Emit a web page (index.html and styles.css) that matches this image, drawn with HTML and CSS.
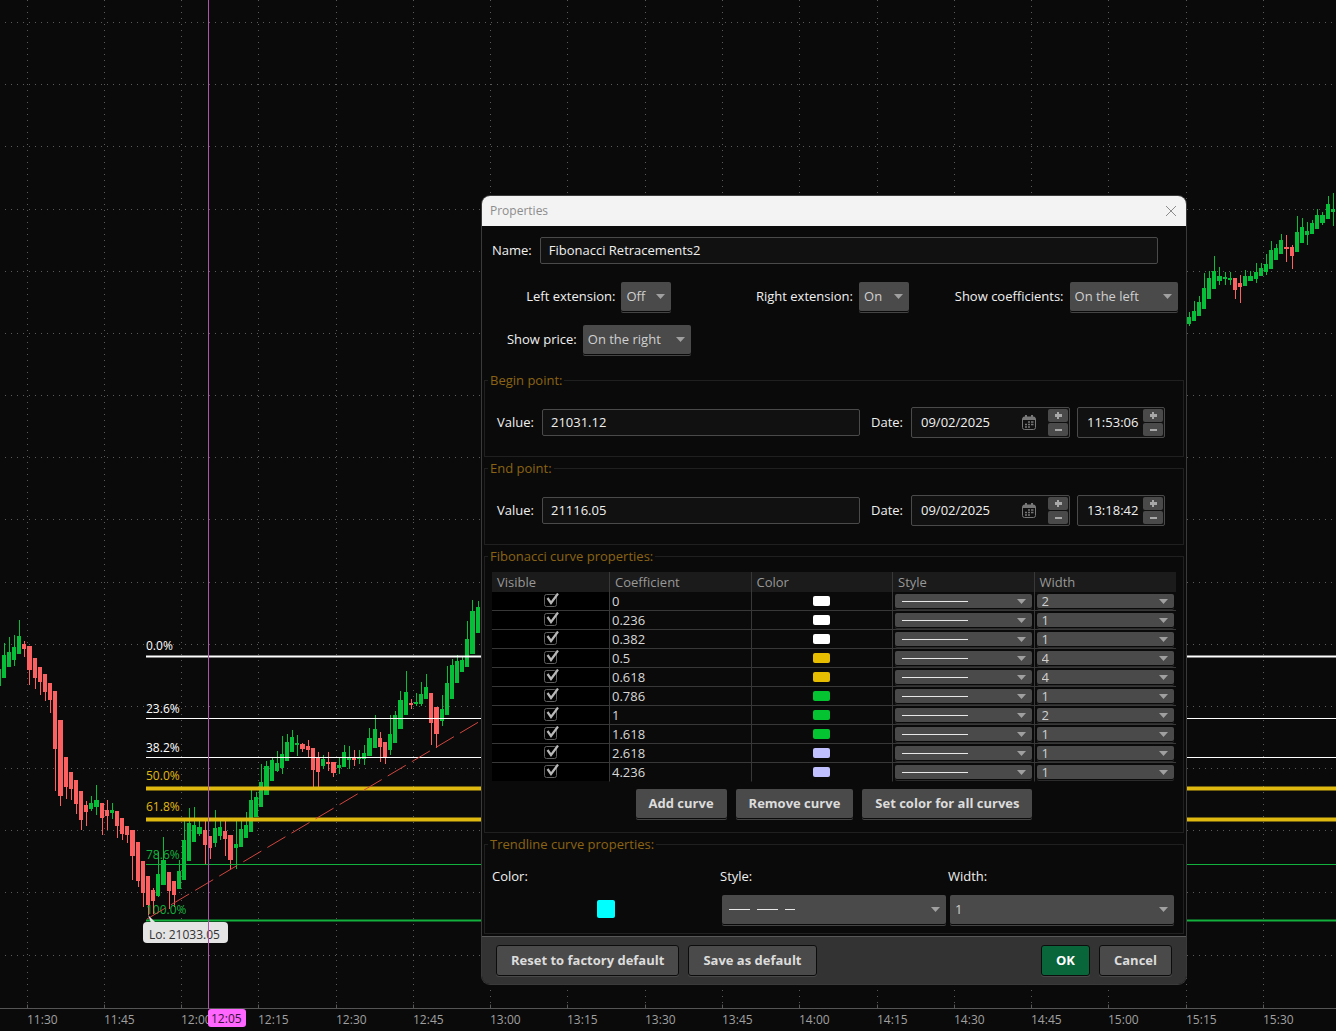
FILE: index.html
```
<!DOCTYPE html>
<html lang="en">
<head>
    <meta charset="UTF-8">
    <meta name="viewport" content="width=device-width, initial-scale=1.0">
    <title>Properties</title>
    <link rel="stylesheet" href="styles.css">
</head>
<body>
    <svg class="chart" id="chart" role="img" aria-label="Price chart">
        <g id="grid"></g>
        <g id="candles"></g>
        <g id="levels"></g>
        <line class="trend" x1="147" y1="919" x2="482" y2="720" />
        <g id="axis"></g>
        <path class="lo-tip" d="M148 915l8 8h-5z" />
        <rect class="lo-tip" x="143" y="922" width="85" height="21" rx="4" />
        <text class="lo-text" x="149" y="939">Lo: 21033.05</text>
        <line class="cursor" x1="208.5" y1="0" x2="208.5" y2="1009" />
        <rect class="cursor-tag" x="208" y="1009" width="38" height="18" rx="3" />
        <text class="cursor-text" x="211" y="1023">12:05</text>
    </svg>

    <form class="dialog" role="dialog" aria-labelledby="dialogTitle">
        <div class="titlebar">
            <span id="dialogTitle">Properties</span>
            <button type="button" class="close" aria-label="Close">
                <svg width="12" height="12" viewBox="0 0 12 12"><path d="M1 1l10 10M11 1L1 11" /></svg>
            </button>
        </div>

        <div class="name-row">
            <label for="name">Name:</label>
            <input type="text" id="name" value="Fibonacci Retracements2">
        </div>

        <div class="options">
            <div class="option">
                <label for="leftExt">Left extension:</label>
                <select id="leftExt" class="short"><option>Off</option><option>On</option></select>
            </div>
            <div class="option">
                <label for="rightExt">Right extension:</label>
                <select id="rightExt" class="short"><option>On</option><option>Off</option></select>
            </div>
            <div class="option">
                <label for="showCoef">Show coefficients:</label>
                <select id="showCoef" class="long"><option>On the left</option><option>On the right</option></select>
            </div>
            <div class="option">
                <label for="showPrice">Show price:</label>
                <select id="showPrice" class="long"><option>On the right</option><option>On the left</option></select>
            </div>
        </div>

        <fieldset>
            <legend>Begin point:</legend>
            <div class="point">
                <label for="beginValue">Value:</label>
                <input type="text" id="beginValue" class="value" value="21031.12">
                <label for="beginDate" class="date-label">Date:</label>
                <div class="spin date">
                    <input type="text" id="beginDate" value="09/02/2025">
                    <svg class="calendar" width="14" height="15" viewBox="0 0 14 15"><rect x="0.5" y="2" width="13" height="12.5" rx="2" fill="none" stroke="#777" /><path d="M1 2h12v3H1zM3 0h2v3H3zM9 0h2v3H9z" fill="#777" /><path d="M6 7h2M9 7h2.500M3 9.500h2M6 9.500h2M9 9.500h2.500M3 12h2M6 12h2" stroke="#777" stroke-width="1.400" /></svg>
                    <div class="steps"><button type="button" class="plus" aria-label="Date up"></button><button type="button" class="minus" aria-label="Date down"></button></div>
                </div>
                <div class="spin time">
                    <input type="text" aria-label="Begin time" value="11:53:06">
                    <div class="steps"><button type="button" class="plus" aria-label="Time up"></button><button type="button" class="minus" aria-label="Time down"></button></div>
                </div>
            </div>
        </fieldset>

        <fieldset>
            <legend>End point:</legend>
            <div class="point">
                <label for="endValue">Value:</label>
                <input type="text" id="endValue" class="value" value="21116.05">
                <label for="endDate" class="date-label">Date:</label>
                <div class="spin date">
                    <input type="text" id="endDate" value="09/02/2025">
                    <svg class="calendar" width="14" height="15" viewBox="0 0 14 15"><rect x="0.5" y="2" width="13" height="12.5" rx="2" fill="none" stroke="#777" /><path d="M1 2h12v3H1zM3 0h2v3H3zM9 0h2v3H9z" fill="#777" /><path d="M6 7h2M9 7h2.500M3 9.500h2M6 9.500h2M9 9.500h2.500M3 12h2M6 12h2" stroke="#777" stroke-width="1.400" /></svg>
                    <div class="steps"><button type="button" class="plus" aria-label="Date up"></button><button type="button" class="minus" aria-label="Date down"></button></div>
                </div>
                <div class="spin time">
                    <input type="text" aria-label="End time" value="13:18:42">
                    <div class="steps"><button type="button" class="plus" aria-label="Time up"></button><button type="button" class="minus" aria-label="Time down"></button></div>
                </div>
            </div>
        </fieldset>

        <fieldset>
            <legend>Fibonacci curve properties:</legend>
            <div class="curves">
                <table>
                    <thead>
                        <tr>
                            <th class="col-visible">Visible</th>
                            <th>Coefficient</th>
                            <th>Color</th>
                            <th>Style</th>
                            <th>Width</th>
                        </tr>
                    </thead>
                    <tbody id="curveRows"></tbody>
                </table>
                <div class="curve-buttons">
                    <button type="button" class="btn">Add curve</button>
                    <button type="button" class="btn">Remove curve</button>
                    <button type="button" class="btn">Set color for all curves</button>
                </div>
            </div>
        </fieldset>

        <fieldset>
            <legend>Trendline curve properties:</legend>
            <div class="trendline">
                <label for="trendColor">Color:</label>
                <label for="trendStyle">Style:</label>
                <label for="trendWidth">Width:</label>
                <input type="color" id="trendColor" class="big-swatch" value="#00ffff">
                <select id="trendStyle" class="line-dashed"><option value="dashed"></option></select>
                <select id="trendWidth"><option>1</option><option>2</option><option>4</option></select>
            </div>
        </fieldset>

        <div class="footer">
            <button type="button" class="btn">Reset to factory default</button>
            <button type="button" class="btn">Save as default</button>
            <button type="submit" class="btn ok">OK</button>
            <button type="button" class="btn">Cancel</button>
        </div>
    </form>

    <script src="script.js"></script>
</body>
</html>
```

FILE: styles.css
```
* {
    box-sizing: border-box;
}
body {
    margin: 0;
    height: 100vh;
    position: relative;
    overflow: hidden;
    background: #0a0a0a;
    color: #f0f0f0;
    font-family: 'Open Sans', 'Noto Sans', sans-serif;
    font-size: 13px;
    line-height: 18px;
}
input, select, button {
    font-family: inherit;
    font-size: 13px;
    color: inherit;
    margin: 0;
    padding: 0;
    border: none;
    outline: none;
}

/* Chart */
.chart {
    display: block;
    width: 100%;
    height: 100%;
    font-size: 12px;
}
.grid-h, .grid-v {
    stroke: #5a5a5a;
    stroke-dasharray: 1 5;
}
.up {
    fill: #07be38;
}
.down {
    fill: #fc6060;
}
.trend {
    stroke: #d04640;
    stroke-dasharray: 21 7;
}
.axis-line {
    stroke: #555;
}
.axis-text {
    fill: #a0a0a0;
}
.lo-tip {
    fill: #e4e4e4;
}
.lo-text {
    fill: #333;
}
.cursor {
    stroke: #b052ae;
}
.cursor-tag {
    fill: #ff66ff;
}
.cursor-text {
    fill: #3a123a;
}

/* Dialog window over the chart */
.dialog {
    position: absolute;
    top: 196px;
    left: 482px;
    width: 704px;
    background: #0a0a0a;
    border-radius: 8px;
    box-shadow: 0 0 0 1px #3a3a3a;
    overflow: hidden;
}
.titlebar {
    display: flex;
    align-items: center;
    justify-content: space-between;
    height: 30px;
    padding: 0 9px 0 8px;
    background: #f3f3f3;
    color: #8c8c8c;
    font-size: 12px;
}
.close {
    display: flex;
    background: none;
}
.close path {
    stroke: #8c8c8c;
    fill: none;
}
.name-row {
    display: flex;
    align-items: center;
    gap: 8px;
    padding: 11px 28px 0 10px;
}
.name-row input, .value {
    flex: 1;
    min-width: 0;
    height: 27px;
    padding: 0 8px 2px;
    background: #111;
    border: 1px solid #4a4a4a;
    border-radius: 2px;
}
.name-row label, .option label, .point label {
    padding-bottom: 2px;
}
.options {
    display: grid;
    grid-template-columns: repeat(3, 1fr);
    row-gap: 14px;
    padding: 18px 3px 17px 0;
}
.option {
    display: flex;
    align-items: center;
    justify-content: center;
    gap: 6px;
}
select {
    appearance: none;
    height: 29px;
    padding: 0 5px 2px;
    border-radius: 2px;
    color: #d0d0d0;
    background-color: #4a4a4a;
    background-image: url("data:image/svg+xml,%3Csvg xmlns='http://www.w3.org/2000/svg' width='9' height='5'%3E%3Cpath d='M0 0h9L4.500 5z' fill='%23a0a0a0'/%3E%3C/svg%3E");
    background-repeat: no-repeat;
    background-position: right 6px center;
    box-shadow: 0 1px #0a0a0a, 0 2px #444;
}
.short {
    width: 50px;
}
.long {
    width: 108px;
}

fieldset {
    margin: 0 2px 2px;
    padding: 0;
    min-width: 0;
    border: 1px solid #202020;
}
legend {
    margin-left: 3px;
    padding: 0 2px;
    color: #8a6414;
}
.point {
    display: flex;
    align-items: center;
    gap: 8px;
    padding: 18px 18px 18px 12px;
}
.date-label {
    margin-left: 3px;
}
.spin {
    display: flex;
    align-items: center;
    height: 31px;
    padding: 1px;
    background: #111;
    border: 1px solid #4a4a4a;
    border-radius: 2px;
}
.spin input {
    flex: 1;
    min-width: 0;
    padding: 0 0 2px 8px;
    background: none;
}
.date {
    width: 159px;
}
.time {
    width: 88px;
    margin-left: -1px;
}
.calendar {
    margin-right: 12px;
}
.steps {
    display: flex;
    flex-direction: column;
    gap: 1px;
}
.plus, .minus {
    width: 20px;
    height: 13px;
    border-radius: 2px;
    background: linear-gradient(#a8a8a8, #a8a8a8) center / 7px 2px no-repeat #4a4a4a;
}
.plus {
    background: linear-gradient(#a8a8a8, #a8a8a8) center / 7px 3px no-repeat, linear-gradient(#a8a8a8, #a8a8a8) center / 2px 7px no-repeat #4a4a4a;
}

/* Curves table */
.curves {
    padding: 7px 7px 14px;
}
table {
    width: 100%;
    table-layout: fixed;
    border-collapse: separate;
    border-spacing: 0;
}
th {
    height: 20px;
    padding: 0 5px;
    text-align: left;
    font-weight: 400;
    color: #989898;
    background: #1b1b1b;
    border-right: 1px solid #383838;
}
.col-visible {
    width: 118px;
}
td {
    height: 19px;
    padding: 0 2px;
    line-height: 16px;
    color: #d8d8d8;
    border-right: 1px solid #383838;
    border-bottom: 1px solid #383838;
}
th:last-child, td:last-child {
    border-right: none;
}
tr:last-child td {
    border-bottom-color: #0a0a0a;
}
td.visible {
    padding: 0 0 2px 1px;
    background: #000;
}
td input, td select {
    display: block;
    margin: 0 auto;
}
td select {
    width: 100%;
    height: 14px;
    padding: 0 5px;
    line-height: 14px;
    box-shadow: 0 1px #0a0a0a, 0 2px #2c2c2c;
}
input[type="checkbox"] {
    appearance: none;
    width: 15px;
    height: 15px;
    background: url("data:image/svg+xml,%3Csvg xmlns='http://www.w3.org/2000/svg' width='15' height='15'%3E%3Crect x='.5' y='1.500' width='12' height='12' rx='2' fill='none' stroke='%23606060'/%3E%3Cpath d='M3.500 5l3.500 5L14 .5' fill='none' stroke='%23b8b8b8' stroke-width='2.200'/%3E%3C/svg%3E") no-repeat;
}
input[type="color"] {
    appearance: none;
    width: 17px;
    height: 10px;
    background: none;
}
input[type="color"]::-webkit-color-swatch-wrapper {
    padding: 0;
}
input[type="color"]::-webkit-color-swatch {
    border: none;
    border-radius: 2px;
}
.line-solid, .line-dashed {
    background-image: url("data:image/svg+xml,%3Csvg xmlns='http://www.w3.org/2000/svg' width='9' height='5'%3E%3Cpath d='M0 0h9L4.500 5z' fill='%23a0a0a0'/%3E%3C/svg%3E"), linear-gradient(#e8e8e8, #e8e8e8);
    background-size: auto, 66px 1px;
    background-position: right 6px center, 7px center;
}
.line-dashed {
    background-image: url("data:image/svg+xml,%3Csvg xmlns='http://www.w3.org/2000/svg' width='9' height='5'%3E%3Cpath d='M0 0h9L4.500 5z' fill='%23a0a0a0'/%3E%3C/svg%3E"), url("data:image/svg+xml,%3Csvg xmlns='http://www.w3.org/2000/svg' width='66' height='1'%3E%3Cpath d='M0 .5h21m7 0h21m7 0h10' stroke='%23e8e8e8'/%3E%3C/svg%3E");
}

.btn {
    height: 29px;
    padding: 0 13px 2px;
    border-radius: 2px;
    font-weight: 700;
    color: #dcdcdc;
    background: #4a4a4a;
    box-shadow: 0 1px #0a0a0a, 0 2px #444;
}
.curve-buttons {
    display: flex;
    justify-content: center;
    gap: 9px;
    margin-top: 7px;
}
.trendline {
    display: grid;
    grid-template-columns: repeat(3, 1fr);
    row-gap: 10px;
    padding: 14px 7px 9px;
}
.trendline select {
    margin: 0 2px;
}
input.big-swatch {
    width: 18px;
    height: 18px;
    margin: 5px auto 0;
}
.footer {
    display: flex;
    gap: 9px;
    padding: 8px 14px;
    background: #333;
    border-top: 1px solid #585858;
}
.footer .btn {
    height: 31px;
    padding: 0 14px 2px;
    border: 1px solid #0c0c0c;
    border-radius: 3px;
    box-shadow: 0 1px #484848;
}
.footer .ok {
    margin-left: auto;
    color: #fff;
    background: #09653a;
}
```

FILE: script.js
```
const SVG_NS = 'http://www.w3.org/2000/svg';

function add(parent, tag, attrs, text) {
    const el = document.createElementNS(SVG_NS, tag);
    for (const key in attrs) {
        el.setAttribute(key, attrs[key]);
    }
    if (text) {
        el.textContent = text;
    }
    document.getElementById(parent).appendChild(el);
}

// Grid and time axis, one vertical line per 15 minutes
const AXIS_Y = 1008.5;
for (let i = 0; i < 16; i++) {
    const y = Math.floor(22.6 + 62.17 * i) + 0.5;
    add('grid', 'line', { class: 'grid-h', x1: 5, y1: y, x2: '100%', y2: y });
}
for (let i = 0; i < 17; i++) {
    const x = Math.floor(27 + 77.28 * i) + 0.5;
    const minutes = 690 + i * 15;
    const label = Math.floor(minutes / 60) + ':' + String(minutes % 60).padStart(2, '0');
    add('grid', 'line', { class: 'grid-v', x1: x, y1: 0, x2: x, y2: AXIS_Y });
    add('axis', 'line', { class: 'axis-line', x1: x, y1: AXIS_Y - 4, x2: x, y2: AXIS_Y });
    add('axis', 'text', { class: 'axis-text', x: x - 0.5, y: 1024 }, label);
}
add('axis', 'line', { class: 'axis-line', x1: 0, y1: AXIS_Y, x2: '100%', y2: AXIS_Y });

// Candles: direction, high, body top, body bottom, low
const STEP = 5.1515;
const morning = `g 669 669 686 686,g 643 655 678 678,g 637 652 667 667,g 635 647 660 666,g 620 636 654 654,
r 641 644 649 657,r 646 646 670 685,r 658 658 678 689,r 667 667 682 695,r 674 674 692 701,
r 683 683 700 713,r 691 691 749 791,r 720 720 796 806,r 757 757 787 799,r 772 772 789 800,
r 780 780 804 814,r 791 791 820 830,r 801 805 812 826,g 796 803 809 811,g 785 800 807 815,
r 803 803 818 835,r 800 810 816 830,g 803 810 813 819,r 811 811 826 838,r 818 818 834 840,
r 826 826 835 843,r 830 830 856 880,r 842 842 881 887,r 861 861 893 907,r 876 876 905 915,
r 888 890 901 914,g 852 874 896 897,g 837 860 885 885,r 872 872 891 909,r 881 881 895 907,
g 860 871 889 889,g 820 840 880 880,g 808 823 861 861,g 807 825 842 842,g 821 827 834 836,
r 820 830 845 864,r 836 836 848 859,g 810 828 843 847,g 820 827 836 840,r 821 831 839 856,
r 835 835 860 870,g 820 844 848 869,g 820 829 847 847,g 812 825 838 838,g 788 800 832 832,
g 792 797 817 817,g 764 782 807 807,g 761 766 795 795,g 757 760 781 781,g 751 763 771 772,
g 736 754 768 774,g 734 742 761 761,g 730 737 752 752,g 735 743 745 756,r 743 744 749 752,
r 740 746 750 757,r 748 748 770 787,r 752 758 772 787,g 755 759 766 769,r 752 762 764 771,
r 762 762 773 777,g 758 765 768 774,g 745 752 767 767,g 746 758 760 769,r 750 758 760 766,
g 750 758 759 764,g 745 753 759 765,g 728 738 756 756,g 715 729 748 748,r 732 738 747 762,
r 742 742 758 764,g 715 734 750 755,g 711 715 743 743,g 691 700 729 729,g 671 692 715 715,
r 699 703 705 709,g 693 702 704 706,g 682 694 704 706,g 674 687 699 699,r 693 693 723 745,
r 707 707 734 748,g 695 709 721 726,g 666 683 715 715,g 659 665 699 699,g 655 661 683 683,
g 657 660 672 672,g 621 639 667 667,g 600 611 654 654,g 601 607 633 633`;
const afternoon = `g 312 317 324 326,g 301 311 321 321,g 296 302 316 316,g 273 288 309 309,g 271 278 299 299,
g 256 271 289 289,g 267 276 281 285,g 272 277 279 285,g 272 278 280 285,r 278 278 290 299,
r 275 283 287 303,g 270 276 286 286,g 271 276 281 281,g 263 272 279 283,g 263 268 276 276,
g 254 264 272 275,g 241 250 269 269,g 244 248 260 260,g 234 240 254 254,r 235 247 249 262,
r 245 247 256 269,g 216 232 252 252,g 218 227 243 243,g 222 231 235 245,g 220 223 234 234,
g 209 215 229 229,g 212 215 223 225,g 196 204 219 219,g 193 209 212 226`;

function candleLeft(i) {
    return Math.floor(2.2 + STEP * (i - 1));
}

function drawCandles(data, start) {
    data.split(',').forEach((row, i) => {
        const [dir, high, top, bottom, low] = row.trim().split(' ');
        const cls = dir === 'g' ? 'up' : 'down';
        const x = candleLeft(start + i);
        const width = candleLeft(start + i + 1) - x - 1;
        add('candles', 'rect', { class: cls, x: x + 2, y: high, width: 1, height: low - high });
        add('candles', 'rect', { class: cls, x: x, y: top, width: width, height: bottom - top });
    });
}
drawCandles(morning, 0);
drawCandles(afternoon, 231);

// Retracement levels
const levels = [
    ['0.0%', 656.5, 2, '#ffffff', 650],
    ['23.6%', 718.5, 1, '#ffffff', 713],
    ['38.2%', 757.5, 1, '#ffffff', 752],
    ['50.0%', 788.5, 4, '#e0b910', 780],
    ['61.8%', 819.5, 4, '#e0b910', 811],
    ['78.6%', 864.5, 1, '#12b03c', 859],
    ['100.0%', 920.5, 2, '#12b03c', 914]
];
levels.forEach(([label, y, width, color, textY]) => {
    add('levels', 'line', { x1: 146, y1: y, x2: '100%', y2: y, stroke: color, 'stroke-width': width });
    add('levels', 'text', { x: 146, y: textY, fill: color }, label);
});

// Curve rows
const curves = [
    ['0', '#ffffff', 2],
    ['0.236', '#ffffff', 1],
    ['0.382', '#ffffff', 1],
    ['0.5', '#e6bd00', 4],
    ['0.618', '#e6bd00', 4],
    ['0.786', '#04c531', 1],
    ['1', '#04c531', 2],
    ['1.618', '#04c531', 1],
    ['2.618', '#c0c0ff', 1],
    ['4.236', '#c0c0ff', 1]
];
document.getElementById('curveRows').innerHTML = curves.map(([coef, color, width]) => `
    <tr>
        <td class="visible"><input type="checkbox" aria-label="Visible ${coef}" checked></td>
        <td>${coef}</td>
        <td><input type="color" aria-label="Color ${coef}" value="${color}"></td>
        <td><select class="line-solid" aria-label="Style ${coef}"><option value="solid"></option></select></td>
        <td><select aria-label="Width ${coef}"><option>${width}</option></select></td>
    </tr>`).join('');
```
